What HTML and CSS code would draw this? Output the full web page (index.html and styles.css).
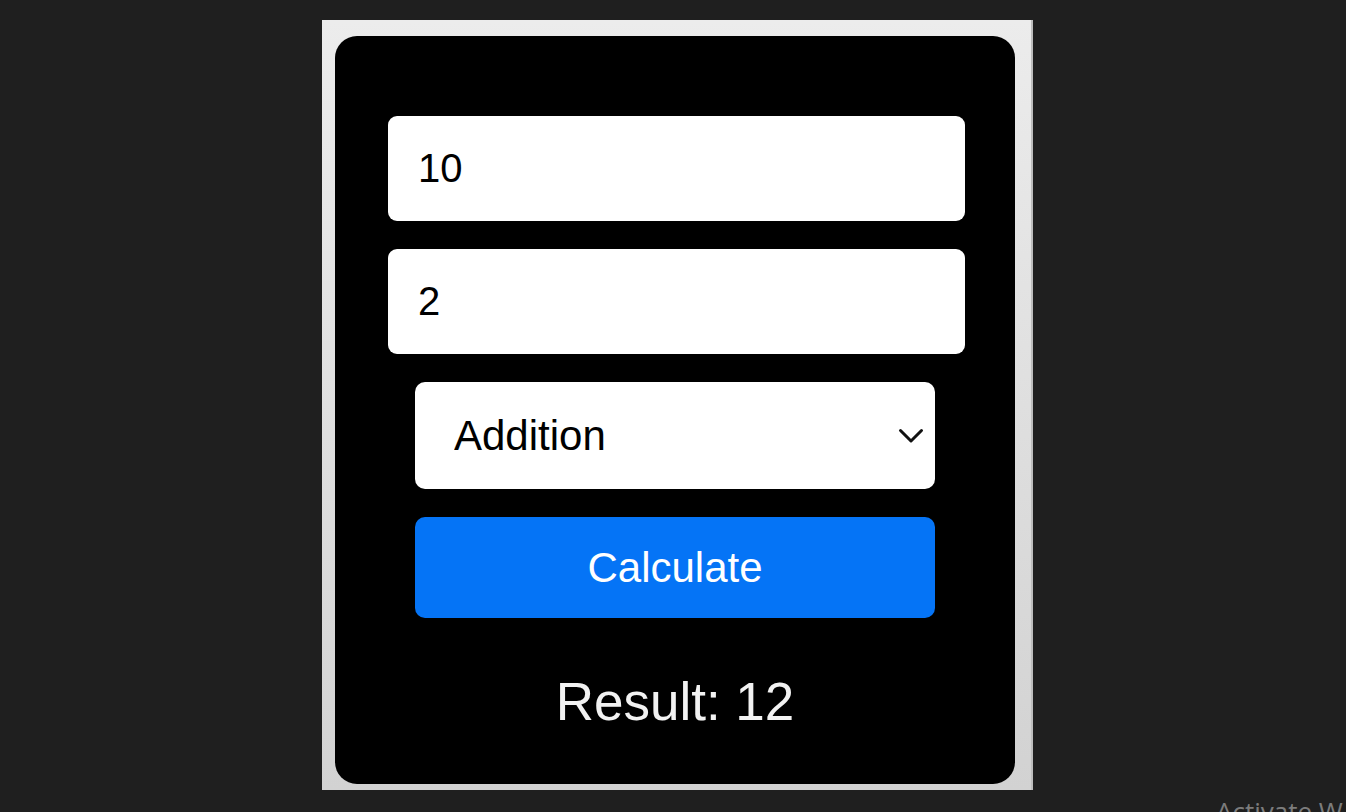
FILE: index.html
```html
<!DOCTYPE html>
<html lang="en">
<head>
<meta charset="utf-8">
<title>Calculator</title>
<link rel="stylesheet" href="styles.css">
</head>
<body>
<div class="frame">
  <div class="card">
    <input class="num" type="text" value="10">
    <input class="num" type="text" value="2">
    <div class="select-wrap">
      <select class="op">
        <option>Addition</option>
        <option>Subtraction</option>
        <option>Multiplication</option>
        <option>Division</option>
      </select>
      <svg class="chev" width="26" height="16" viewBox="0 0 26 16" aria-hidden="true">
        <path d="M2.5 2.5 L13 13 L23.5 2.5" fill="none" stroke="#111" stroke-width="3" stroke-linecap="round" stroke-linejoin="round"/>
      </svg>
    </div>
    <button class="calc" type="button">Calculate</button>
    <div class="result">Result: 12</div>
  </div>
</div>
<div class="watermark">Activate W</div>
</body>
</html>
```

FILE: styles.css
```css
html, body {
  margin: 0;
  height: 812px;
  overflow: hidden;
}
body {
  background: #1f1f1f;
  font-family: "Liberation Sans", Arial, sans-serif;
}
.frame {
  margin: 20px 0 0 322px;
  width: 711px;
  height: 770px;
  box-sizing: border-box;
  padding: 16px 18px 6px 13px;
  background: linear-gradient(#ececec, #d2d2d2);
  border-right: 2px solid #bdbdbd;
}
.card {
  width: 680px;
  height: 748px;
  box-sizing: border-box;
  background: #000;
  border-radius: 22px;
  padding-top: 80px;
  display: flex;
  flex-direction: column;
  align-items: center;
}
.num {
  width: 577px;
  height: 105px;
  box-sizing: border-box;
  margin: 0 0 28px 3px;
  border: none;
  border-radius: 9px;
  padding: 0 30px;
  background: #fff;
  color: #000;
  font-family: "Liberation Sans", Arial, sans-serif;
  font-size: 40px;
  outline: none;
}
.select-wrap {
  position: relative;
  width: 520px;
  height: 107px;
  margin-bottom: 28px;
}
.op {
  width: 100%;
  height: 100%;
  box-sizing: border-box;
  -webkit-appearance: none;
  appearance: none;
  border: none;
  border-radius: 10px;
  background: #fff;
  color: #000;
  padding: 0 0 0 39px;
  font-family: "Liberation Sans", Arial, sans-serif;
  font-size: 42px;
  outline: none;
}
.chev {
  position: absolute;
  right: 11px;
  top: 46px;
  pointer-events: none;
}
.calc {
  width: 520px;
  height: 101px;
  border: none;
  border-radius: 10px;
  background: #0574f6;
  color: #fff;
  font-family: "Liberation Sans", Arial, sans-serif;
  font-size: 42px;
  margin-bottom: 53px;
  padding: 0;
}
.result {
  font-size: 53px;
  line-height: 62px;
  color: #f2f2f2;
}
.watermark {
  position: absolute;
  left: 1216px;
  top: 793px;
  font-family: "Open Sans", "Noto Sans", sans-serif;
  font-size: 26px;
  color: #7c7c7c;
  white-space: nowrap;
}
```
